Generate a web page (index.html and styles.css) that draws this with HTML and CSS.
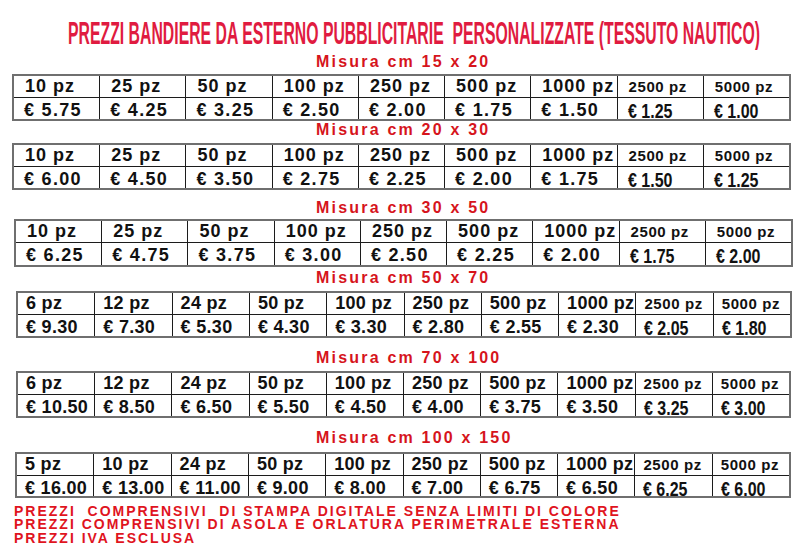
FILE: index.html
```html
<!DOCTYPE html>
<html lang="it">
<head>
<meta charset="utf-8">
<title>Prezzi bandiere</title>
<link rel="stylesheet" href="styles.css">
</head>
<body>
<div class="title"><span>PREZZI BANDIERE DA ESTERNO PUBBLICITARIE  PERSONALIZZATE (TESSUTO NAUTICO)</span></div>

<div class="label l1">Misura cm 15 x 20</div>
<div class="grid g9 wide t1">
  <div class="c">10 pz</div><div class="c">25 pz</div><div class="c">50 pz</div><div class="c">100 pz</div><div class="c">250 pz</div><div class="c">500 pz</div><div class="c">1000 pz</div><div class="c s">2500 pz</div><div class="c s">5000 pz</div>
  <div class="c p">€ 5.75</div><div class="c p">€ 4.25</div><div class="c p">€ 3.25</div><div class="c p">€ 2.50</div><div class="c p">€ 2.00</div><div class="c p">€ 1.75</div><div class="c p">€ 1.50</div><div class="c p n"><span>€ 1.25</span></div><div class="c p n"><span>€ 1.00</span></div>
</div>

<div class="label l2">Misura cm 20 x 30</div>
<div class="grid g9 wide t2">
  <div class="c">10 pz</div><div class="c">25 pz</div><div class="c">50 pz</div><div class="c">100 pz</div><div class="c">250 pz</div><div class="c">500 pz</div><div class="c">1000 pz</div><div class="c s">2500 pz</div><div class="c s">5000 pz</div>
  <div class="c p">€ 6.00</div><div class="c p">€ 4.50</div><div class="c p">€ 3.50</div><div class="c p">€ 2.75</div><div class="c p">€ 2.25</div><div class="c p">€ 2.00</div><div class="c p">€ 1.75</div><div class="c p n"><span>€ 1.50</span></div><div class="c p n"><span>€ 1.25</span></div>
</div>

<div class="label l3">Misura cm 30 x 50</div>
<div class="grid g9 wide t3">
  <div class="c">10 pz</div><div class="c">25 pz</div><div class="c">50 pz</div><div class="c">100 pz</div><div class="c">250 pz</div><div class="c">500 pz</div><div class="c">1000 pz</div><div class="c s">2500 pz</div><div class="c s">5000 pz</div>
  <div class="c p">€ 6.25</div><div class="c p">€ 4.75</div><div class="c p">€ 3.75</div><div class="c p">€ 3.00</div><div class="c p">€ 2.50</div><div class="c p">€ 2.25</div><div class="c p">€ 2.00</div><div class="c p n"><span>€ 1.75</span></div><div class="c p n"><span>€ 2.00</span></div>
</div>

<div class="label l4">Misura cm 50 x 70</div>
<div class="grid g10 t4">
  <div class="c">6 pz</div><div class="c">12 pz</div><div class="c">24 pz</div><div class="c">50 pz</div><div class="c">100 pz</div><div class="c">250 pz</div><div class="c">500 pz</div><div class="c">1000 pz</div><div class="c s">2500 pz</div><div class="c s">5000 pz</div>
  <div class="c p">€ 9.30</div><div class="c p">€ 7.30</div><div class="c p">€ 5.30</div><div class="c p">€ 4.30</div><div class="c p">€ 3.30</div><div class="c p">€ 2.80</div><div class="c p">€ 2.55</div><div class="c p">€ 2.30</div><div class="c p n"><span>€ 2.05</span></div><div class="c p n"><span>€ 1.80</span></div>
</div>

<div class="label l5">Misura cm 70 x 100</div>
<div class="grid g10 t5">
  <div class="c">6 pz</div><div class="c">12 pz</div><div class="c">24 pz</div><div class="c">50 pz</div><div class="c">100 pz</div><div class="c">250 pz</div><div class="c">500 pz</div><div class="c">1000 pz</div><div class="c s">2500 pz</div><div class="c s">5000 pz</div>
  <div class="c p">€ 10.50</div><div class="c p">€ 8.50</div><div class="c p">€ 6.50</div><div class="c p">€ 5.50</div><div class="c p">€ 4.50</div><div class="c p">€ 4.00</div><div class="c p">€ 3.75</div><div class="c p">€ 3.50</div><div class="c p n"><span>€ 3.25</span></div><div class="c p n"><span>€ 3.00</span></div>
</div>

<div class="label l6">Misura cm 100 x 150</div>
<div class="grid g10 t6">
  <div class="c">5 pz</div><div class="c">10 pz</div><div class="c">24 pz</div><div class="c">50 pz</div><div class="c">100 pz</div><div class="c">250 pz</div><div class="c">500 pz</div><div class="c">1000 pz</div><div class="c s">2500 pz</div><div class="c s">5000 pz</div>
  <div class="c p">€ 16.00</div><div class="c p">€ 13.00</div><div class="c p">€ 11.00</div><div class="c p">€ 9.00</div><div class="c p">€ 8.00</div><div class="c p">€ 7.00</div><div class="c p">€ 6.75</div><div class="c p">€ 6.50</div><div class="c p n"><span>€ 6.25</span></div><div class="c p n"><span>€ 6.00</span></div>
</div>

<div class="foot">
<div class="fl">PREZZI  COMPRENSIVI  DI STAMPA DIGITALE SENZA LIMITI DI COLORE</div>
<div class="fl">PREZZI COMPRENSIVI DI ASOLA E ORLATURA PERIMETRALE ESTERNA</div>
<div class="fl">PREZZI IVA ESCLUSA</div>
</div>
</body>
</html>
```
FILE: styles.css
```css
* { box-sizing: border-box; }
html, body { margin: 0; padding: 0; background: #ffffff; }
body {
  font-family: "Liberation Sans", Arial, sans-serif;
  width: 800px;
  overflow: hidden;
}

.title {
  display: flex;
  justify-content: center;
  align-items: flex-start;
  padding-left: 28px;
  margin-top: 31px;
  height: 16px;
}
.title span {
  display: inline-block;
  font-size: 15.8px;
  line-height: 16px;
  font-weight: bold;
  color: #e01b40;
  white-space: pre;
  transform-origin: 50% 13.4px;
  transform: scaleY(2.04);
}

.label {
  margin-left: 316px;
  height: 16px;
  font-size: 16px;
  line-height: 16px;
  font-weight: bold;
  letter-spacing: 2.2px;
  color: #d6141c;
  white-space: nowrap;
}
.l1 { margin-top: 7px; }
.l2 { margin-top: 1px; }
.l3 { margin-top: 10px; }
.l4 { margin-top: 3px; }
.l5 { margin-top: 12px; }
.l6 { margin-top: 12px; }

.grid {
  display: grid;
  gap: 1px;
  background: #1c1c1c;
  border: 2px solid #6f6f6f;
  grid-template-rows: 21px 21px;
}
.g9 { grid-template-columns: repeat(9, minmax(0, 1fr)); }
.g10 { grid-template-columns: repeat(10, minmax(0, 1fr)); }

.t1 { margin: 4px 0 0 12px; width: 779px; }
.t2 { margin: 5px 0 0 12px; width: 779px; }
.t3 { margin: 3px 0 0 14px; width: 779px; grid-template-rows: 21px 22px; }
.t4 { margin: 5px 0 0 16px; width: 776px; }
.t5 { margin: 5px 0 0 16px; width: 775px; }
.t6 { margin: 6px 0 0 15px; width: 776px; grid-template-rows: 21px 20px; }

.c {
  background: #ffffff;
  color: #111111;
  font-size: 18px;
  line-height: 21px;
  font-weight: bold;
  white-space: nowrap;
  padding-left: 8px;
  letter-spacing: 0.3px;
}
.wide .c { padding-left: 11px; letter-spacing: 1px; }
.wide .c.p { padding-left: 10px; letter-spacing: 1.3px; }
.c.p { line-height: 25px; }
.c.s { font-size: 15px; letter-spacing: 0.6px; }
.wide .c.s { letter-spacing: 0.6px; }
.c.n span {
  display: inline-block;
  font-size: 20px;
  letter-spacing: 0;
  transform-origin: left center;
  transform: translateY(1px) scaleX(0.8);
}
.wide .c.n span { letter-spacing: 0; }

.foot {
  margin: 7px 0 0 14px;
}
.fl {
  height: 13.3px;
  font-size: 14px;
  line-height: 13.3px;
  font-weight: bold;
  letter-spacing: 2px;
  color: #e0141e;
  white-space: pre;
}
```
